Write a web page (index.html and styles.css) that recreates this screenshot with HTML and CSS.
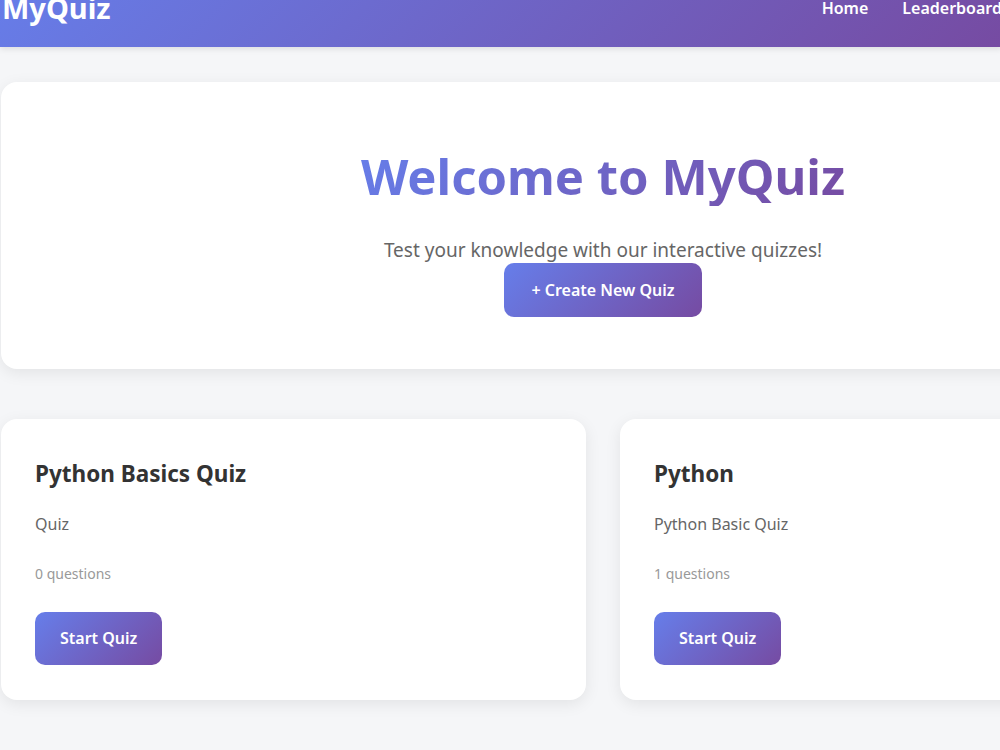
FILE: index.html
```html
<!DOCTYPE html>
<html lang="en">
<head>
    <meta charset="UTF-8">
    <title>MyQuiz</title>
    <link rel="stylesheet" href="styles.css">
</head>
<body>
    <header class="site-header">
        <div class="logo">MyQuiz</div>
        <nav class="nav">
            <a href="#">Home</a>
            <a href="#">Leaderboard</a>
        </nav>
    </header>

    <main class="container">
        <section class="hero">
            <h1>Welcome to MyQuiz</h1>
            <p>Test your knowledge with our interactive quizzes!</p>
            <button class="btn btn-large">+ Create New Quiz</button>
        </section>

        <section class="quiz-grid">
            <div class="quiz-card">
                <h3>Python Basics Quiz</h3>
                <p class="desc">Quiz</p>
                <p class="count">0 questions</p>
                <button class="btn">Start Quiz</button>
            </div>
            <div class="quiz-card">
                <h3>Python</h3>
                <p class="desc">Python Basic Quiz</p>
                <p class="count">1 questions</p>
                <button class="btn">Start Quiz</button>
            </div>
        </section>
    </main>
</body>
</html>
```

FILE: styles.css
```css
body {
    font-family: 'Segoe UI', 'Noto Sans', sans-serif;
    background-color: #f5f6f8;
    margin: 0;
    padding: 0;
    width: 1000px;
    height: 750px;
    overflow: hidden;
}

.site-header {
    width: 1000px;
    margin-top: -31px;
    padding: 20px 0 20px 2px;
    display: flex;
    justify-content: space-between;
    align-items: center;
    background: linear-gradient(135deg, #667eea 0%, #764ba2 100%);
    color: white;
    box-shadow: 0 2px 6px rgba(0, 0, 0, 0.1);
}

.logo {
    font-size: 29px;
    font-weight: 700;
    line-height: 38px;
}

.nav {
    display: flex;
    gap: 34px;
}

.nav a {
    color: white;
    text-decoration: none;
    font-size: 16px;
    font-weight: 600;
}

.container {
    width: 1204px;
    margin-left: 1px;
    padding-top: 35px;
}

.hero {
    background: #fff;
    border-radius: 16px;
    box-shadow: 0 4px 16px rgba(0, 0, 0, 0.08);
    text-align: center;
    padding: 65px 0 52px;
}

.hero h1 {
    margin: 0;
    font-size: 49px;
    line-height: 1.2;
    font-weight: 700;
    background: linear-gradient(135deg, #667eea 0%, #764ba2 100%);
    -webkit-background-clip: text;
    background-clip: text;
    color: transparent;
    display: inline-block;
}

.hero p {
    margin: 31px 0 0;
    font-size: 19px;
    color: #666;
}

.btn {
    font-family: inherit;
    background: linear-gradient(135deg, #667eea 0%, #764ba2 100%);
    border: none;
    color: white;
    font-size: 16px;
    font-weight: 600;
    padding: 0 25px;
    height: 53px;
    border-radius: 10px;
    cursor: pointer;
}

.btn-large {
    height: 54px;
    padding: 0 27px;
}

.quiz-grid {
    display: grid;
    grid-template-columns: 1fr 1fr;
    gap: 34px;
    margin-top: 50px;
}

.quiz-card {
    background: #fff;
    border-radius: 16px;
    box-shadow: 0 4px 16px rgba(0, 0, 0, 0.08);
    padding: 39px 34px 35px;
}

.quiz-card h3 {
    margin: 0;
    font-size: 22.5px;
    color: #333;
}

.quiz-card .desc {
    margin: 24px 0 0;
    color: #666;
    font-size: 16px;
}

.quiz-card .count {
    margin: 29px 0 29px;
    color: #999;
    font-size: 14px;
}
```
